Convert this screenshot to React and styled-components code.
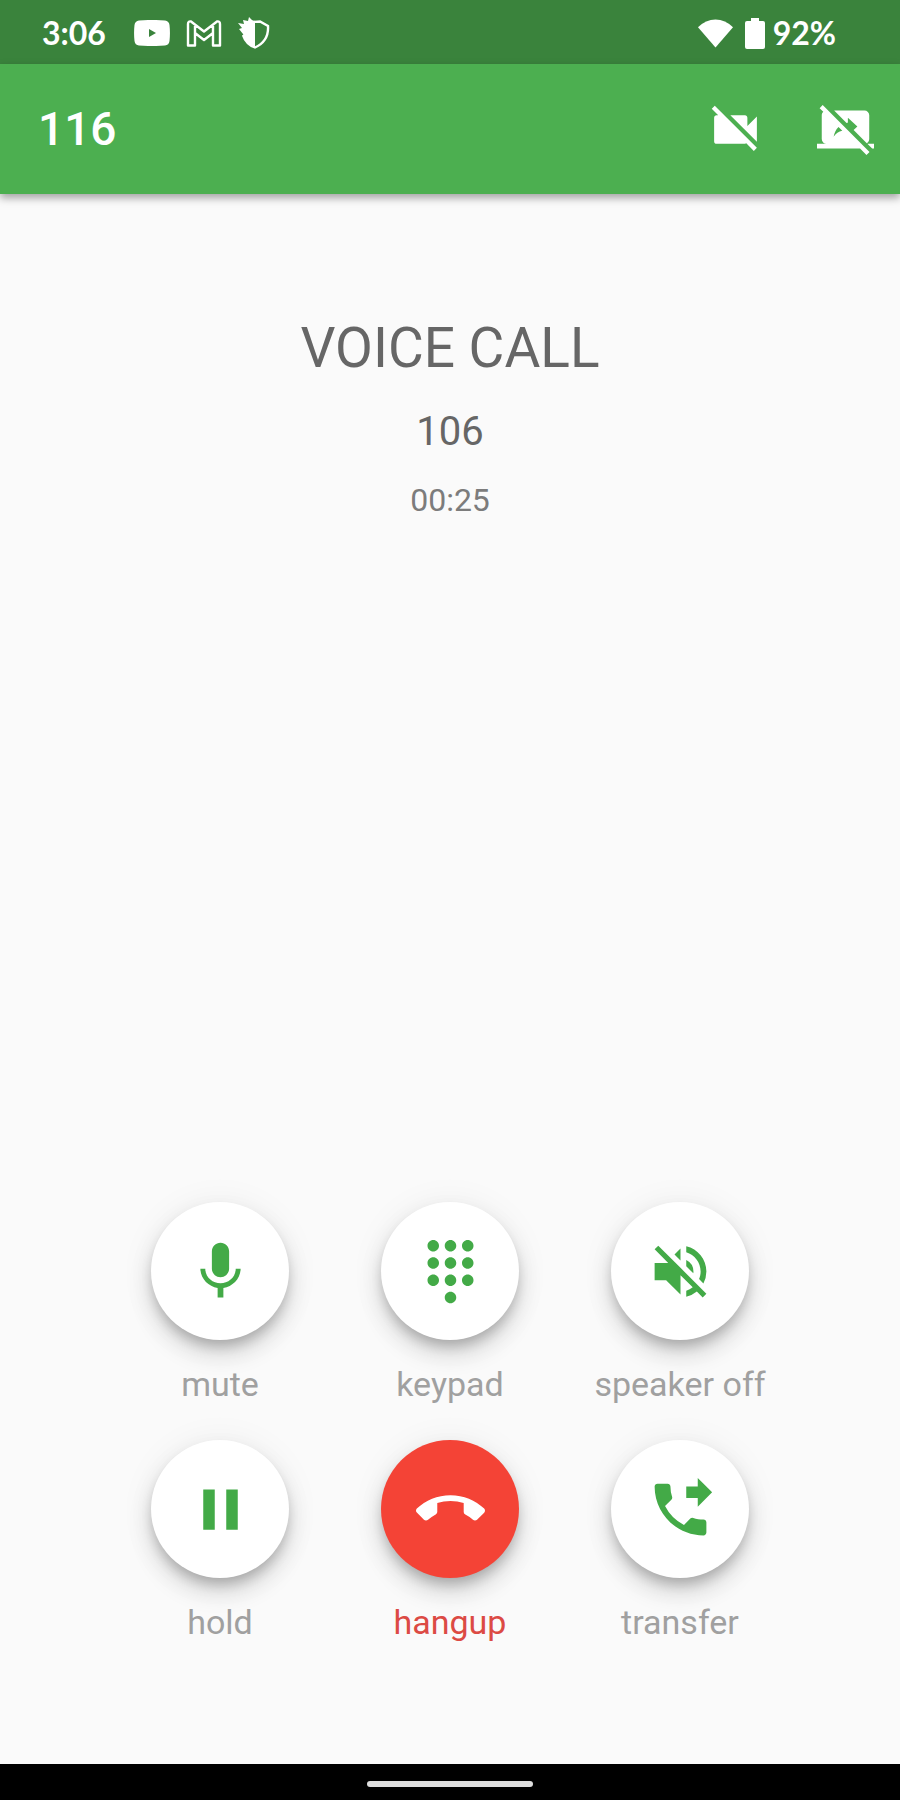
import styled, { createGlobalStyle } from "styled-components";
import {
  MdCallEnd,
  MdDialpad,
  MdMic,
  MdPause,
  MdPhoneForwarded,
  MdStopScreenShare,
  MdVideocamOff,
  MdVolumeOff,
} from "react-icons/md";

const GlobalStyle = createGlobalStyle`
  * {
    box-sizing: border-box;
  }

  body {
    margin: 0;
    background: #fafafa;
    font-family: Roboto, "Liberation Sans", sans-serif;
  }
`;

const Screen = styled.div`
  min-height: 100vh;
  display: flex;
  flex-direction: column;
`;

const StatusBar = styled.div`
  height: 64px;
  padding: 2px 64px 0 42px;
  display: flex;
  align-items: center;
  justify-content: space-between;
  background: #3a833c;
  color: white;
  font-family: Lato, Roboto, sans-serif;
  font-size: 32px;
  font-weight: 700;
  line-height: 40px;
`;

const StatusGroup = styled.div`
  display: flex;
  align-items: center;
  gap: ${(props) => props.$gap};

  & svg {
    display: block;
  }
`;

const AppBar = styled.header`
  height: 130px;
  padding-left: 38px;
  display: flex;
  align-items: center;
  justify-content: space-between;
  background: #4caf50;
  color: white;
  box-shadow: 0 4px 8px rgba(0, 0, 0, 0.35);

  & h1 {
    margin: 0;
    font-size: 46px;
    font-weight: 500;
    line-height: 56px;
  }
`;

const Actions = styled.div`
  display: flex;
`;

const IconButton = styled.button`
  width: 110px;
  height: 110px;
  padding: 0;
  border: none;
  background: none;
  color: inherit;
  font-size: 57px;
  display: flex;
  align-items: center;
  justify-content: center;
  cursor: pointer;
`;

const Main = styled.main`
  flex: 1;
  display: flex;
  flex-direction: column;
  justify-content: space-between;
  padding: 122px 16px 122px;
`;

const CallInfo = styled.section`
  text-align: center;
  color: #666666;

  & h2 {
    margin: 0 0 28px;
    font-size: 55px;
    font-weight: 400;
    line-height: 64px;
  }

  & p {
    margin: 0 0 24px;
    font-size: 40px;
    line-height: 48px;
  }

  & time {
    display: block;
    color: #7c7c7c;
    font-size: 32px;
    line-height: 40px;
  }
`;

const Controls = styled.section`
  display: grid;
  grid-template-columns: repeat(3, 230px);
  justify-content: center;
  row-gap: 36px;
`;

const Control = styled.div`
  display: flex;
  flex-direction: column;
  align-items: center;
  gap: 24px;

  & label {
    color: ${(props) => (props.$danger ? "#dc4a44" : "#a0a0a0")};
    font-size: 34px;
    line-height: 40px;
    white-space: nowrap;
  }
`;

const RoundButton = styled.button`
  width: 138px;
  height: 138px;
  padding: 0;
  border: none;
  border-radius: 50%;
  background: ${(props) => (props.$danger ? "#f44336" : "white")};
  color: ${(props) => (props.$danger ? "white" : "#43aa47")};
  font-size: 69px;
  display: flex;
  align-items: center;
  justify-content: center;
  box-shadow: 0 8px 12px -2px rgba(0, 0, 0, 0.2),
    0 14px 24px rgba(0, 0, 0, 0.14), 0 2px 36px rgba(0, 0, 0, 0.06);
  cursor: pointer;
`;

const NavBar = styled.footer`
  height: 36px;
  padding-top: 4px;
  display: flex;
  align-items: center;
  justify-content: center;
  background: black;
`;

const Handle = styled.div`
  width: 166px;
  height: 6px;
  border-radius: 3px;
  background: #dedede;
`;

const YoutubeIcon = () => (
  <svg width="36" height="26" viewBox="0 0 36 26">
    <path
      fill="white"
      fillRule="evenodd"
      d="M5 .5Q18 -.6 31 .5Q35 1 35.5 5Q36.4 13 35.5 21Q35 25 31 25.500Q18 26.600 5 25.500Q1 25 .5 21Q-.4 13 .5 5Q1 1 5 .5ZM15 9V17L22 13Z"
    />
  </svg>
);

const GmailIcon = () => (
  <svg width="36" height="27" viewBox="0 0 36 27">
    <path
      fill="none"
      stroke="white"
      strokeWidth="2.4"
      strokeLinejoin="round"
      d="M2 25.500V4Q2 1 5 1.500L18 11.500L31 1.500Q34 1 34 4V25.500H27V13L18 20L9 13V25.500ZM9 4.500V13M27 4.500V13"
    />
  </svg>
);

const ShieldIcon = () => (
  <svg width="32" height="32" viewBox="0 0 32 32">
    <path
      fill="none"
      stroke="white"
      strokeWidth="2.4"
      d="M14 5L22 4.500L30 9Q31 24 17 30.500Q8 27 5 18"
    />
    <path
      fill="white"
      d="M11 0L14 3L17 5V30Q7 26 5 17L1 12L4 11L0 6L6 7L5 3L10 4Z"
    />
  </svg>
);

const WifiIcon = () => (
  <svg width="35" height="29" viewBox="0 0 36 29">
    <path fill="white" d="M0 8Q8 0 18 0T36 8L18 29Z" />
  </svg>
);

const BatteryIcon = () => (
  <svg width="20" height="31" viewBox="0 0 20 31">
    <path
      fill="white"
      d="M6 0H14V3H18Q20 3 20 5V29Q20 31 18 31H2Q0 31 0 29V5Q0 3 2 3H6Z"
    />
  </svg>
);

const controls = [
  { id: "mute", label: "mute", Icon: MdMic },
  { id: "keypad", label: "keypad", Icon: MdDialpad },
  { id: "speaker", label: "speaker off", Icon: MdVolumeOff },
  { id: "hold", label: "hold", Icon: MdPause },
  { id: "hangup", label: "hangup", Icon: MdCallEnd, danger: true },
  { id: "transfer", label: "transfer", Icon: MdPhoneForwarded },
];

const App = () => {
  return (
    <Screen>
      <GlobalStyle />
      <StatusBar>
        <StatusGroup $gap="28px">
          <span>3:06</span>
          <StatusGroup $gap="16px">
            <YoutubeIcon />
            <GmailIcon />
            <ShieldIcon />
          </StatusGroup>
        </StatusGroup>
        <StatusGroup $gap="12px">
          <WifiIcon />
          <StatusGroup $gap="8px">
            <BatteryIcon />
            <span>92%</span>
          </StatusGroup>
        </StatusGroup>
      </StatusBar>

      <AppBar>
        <h1>116</h1>
        <Actions>
          <IconButton aria-label="Turn video off">
            <MdVideocamOff />
          </IconButton>
          <IconButton aria-label="Stop screen share">
            <MdStopScreenShare />
          </IconButton>
        </Actions>
      </AppBar>

      <Main>
        <CallInfo>
          <h2>VOICE CALL</h2>
          <p>106</p>
          <time>00:25</time>
        </CallInfo>

        <Controls>
          {controls.map(({ id, label, Icon, danger }) => (
            <Control key={id} $danger={danger}>
              <RoundButton id={id} $danger={danger}>
                <Icon />
              </RoundButton>
              <label htmlFor={id}>{label}</label>
            </Control>
          ))}
        </Controls>
      </Main>

      <NavBar>
        <Handle />
      </NavBar>
    </Screen>
  );
};

export default App;
